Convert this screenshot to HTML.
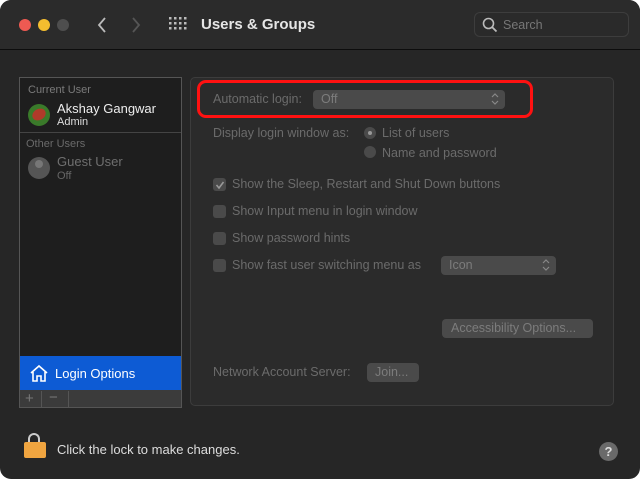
<!DOCTYPE html>
<html><head><style>
*{margin:0;padding:0;box-sizing:border-box}
body{width:640px;height:479px;background:#fff;font-family:"Liberation Sans",sans-serif;overflow:hidden;position:relative}
.win{position:absolute;left:0;top:0;width:640px;height:479px;background:#262626;border-radius:11px;overflow:hidden}
.tb{position:absolute;left:0;top:0;width:640px;height:50px;background:#2b2b2b;border-bottom:1px solid #0d0d0d}
.dot{position:absolute;top:19px;width:12px;height:12px;border-radius:50%}
.a{position:absolute;white-space:nowrap}
.g{color:#6b6b6b;font-size:12.5px}
.cb{position:absolute;width:13px;height:13px;border-radius:3px;background:#4a4a4a}
.pop{position:absolute;background:#4a4a4a;border-radius:4px;color:#7c7c7c;font-size:12.5px;padding:2px 8px}
</style></head><body>
<div class="win">
<div class="tb">
 <div class="dot" style="left:19px;background:#ee5a52"></div>
 <div class="dot" style="left:38px;background:#f4bd2f"></div>
 <div class="dot" style="left:57px;background:#4e4e4e"></div>
 <svg class="a" style="left:96px;top:16px" width="12" height="18"><path d="M9 2L3 9l6 7" stroke="#bbb" stroke-width="1.8" fill="none"/></svg>
 <svg class="a" style="left:130px;top:16px" width="12" height="18"><path d="M3 2l6 7-6 7" stroke="#555" stroke-width="1.8" fill="none"/></svg>
 <svg class="a" style="left:169px;top:17px" width="18" height="16" fill="#bbb">
  <g><rect x="0" y="0" width="2.5" height="2.5"/><rect x="5" y="0" width="2.5" height="2.5"/><rect x="10" y="0" width="2.5" height="2.5"/><rect x="15" y="0" width="2.5" height="2.5"/>
  <rect x="0" y="5" width="2.5" height="2.5"/><rect x="5" y="5" width="2.5" height="2.5"/><rect x="10" y="5" width="2.5" height="2.5"/><rect x="15" y="5" width="2.5" height="2.5"/>
  <rect x="0" y="10" width="2.5" height="2.5"/><rect x="5" y="10" width="2.5" height="2.5"/><rect x="10" y="10" width="2.5" height="2.5"/><rect x="15" y="10" width="2.5" height="2.5"/></g></svg>
 <div class="a" style="left:201px;top:16px;color:#e6e6e6;font-size:15px;font-weight:bold">Users &amp; Groups</div>
 <div class="a" style="left:474px;top:12px;width:155px;height:25px;border:1px solid #3d3d3d;border-radius:6px;background:#2a2a2a"></div>
 <svg class="a" style="left:482px;top:17px" width="16" height="16"><circle cx="6.5" cy="6.5" r="5" stroke="#bbb" stroke-width="1.6" fill="none"/><path d="M10 10l4.5 4.5" stroke="#bbb" stroke-width="1.8"/></svg>
 <div class="a" style="left:503px;top:18px;color:#777;font-size:12.5px">Search</div>
</div>

<div class="a" style="left:19px;top:77px;width:163px;height:331px;background:#1e1e1e;border:1px solid #555"></div>
<div class="a" style="left:20px;top:132px;width:161px;height:1px;background:#444"></div>
<div class="a g" style="left:28px;top:84px;font-size:11px;color:#7a7a7a">Current User</div>
<div class="a" style="left:28px;top:104px;width:22px;height:22px;border-radius:50%;background:#3a7a2a"></div>
<div class="a" style="left:32px;top:109px;width:14px;height:11px;border-radius:50%;background:#b03a2a;transform:rotate(-30deg)"></div>
<div class="a" style="left:57px;top:101px;color:#eee;font-size:13px">Akshay Gangwar</div>
<div class="a" style="left:57px;top:116px;color:#ddd;font-size:11px">Admin</div>
<div class="a" style="left:26px;top:138px;font-size:11px;color:#6a6a6a">Other Users</div>
<div class="a" style="left:28px;top:157px;width:22px;height:22px;border-radius:50%;background:#555"></div>
<div class="a" style="left:35px;top:160px;width:8px;height:8px;border-radius:50%;background:#777"></div>
<div class="a" style="left:57px;top:154px;color:#6f6f6f;font-size:13px">Guest User</div>
<div class="a" style="left:57px;top:170px;color:#666;font-size:11px">Off</div>
<div class="a" style="left:20px;top:356px;width:161px;height:34px;background:#0d5bd4"></div>
<svg class="a" style="left:29px;top:364px" width="20" height="19"><path d="M2 9L10 2l8 7M4 8v9h4v-5h4v5h4V8" stroke="#fff" stroke-width="1.6" fill="none"/></svg>
<div class="a" style="left:55px;top:366px;color:#fff;font-size:13px">Login Options</div>
<div class="a" style="left:20px;top:390px;width:161px;height:17px;background:#3b3b3b"></div>
<div class="a" style="left:41px;top:391px;width:1px;height:16px;background:#555"></div>
<div class="a" style="left:68px;top:391px;width:1px;height:16px;background:#555"></div>
<div class="a" style="left:25px;top:390px;color:#777;font-size:15px">+</div>
<div class="a" style="left:49px;top:389px;color:#777;font-size:15px">−</div>

<div class="a" style="left:190px;top:77px;width:424px;height:329px;background:#2b2b2b;border:1px solid #3c3c3c;border-radius:5px"></div>
<div class="a" style="left:197px;top:80px;width:336px;height:38px;border:3px solid #f11;border-radius:9px"></div>
<div class="a g" style="left:213px;top:92px">Automatic login:</div>
<div class="pop" style="left:313px;top:90px;width:192px;height:19px">Off</div>
<div class="a g" style="left:213px;top:126px">Display login window as:</div>
<div class="a" style="left:364px;top:127px;width:12px;height:12px;border-radius:50%;background:#4a4a4a"></div>
<div class="a" style="left:368px;top:131px;width:4px;height:4px;border-radius:50%;background:#999"></div>
<div class="a g" style="left:382px;top:126px">List of users</div>
<div class="a" style="left:364px;top:146px;width:12px;height:12px;border-radius:50%;background:#4a4a4a"></div>
<div class="a g" style="left:382px;top:146px">Name and password</div>
<div class="cb" style="left:213px;top:178px"></div>
<svg class="a" style="left:214px;top:179px" width="12" height="12"><path d="M2.5 6l2.5 3 4.5-6" stroke="#999" stroke-width="1.6" fill="none"/></svg>
<div class="a g" style="left:232px;top:177px">Show the Sleep, Restart and Shut Down buttons</div>
<div class="cb" style="left:213px;top:205px"></div>
<div class="a g" style="left:232px;top:204px">Show Input menu in login window</div>
<div class="cb" style="left:213px;top:232px"></div>
<div class="a g" style="left:232px;top:231px">Show password hints</div>
<div class="cb" style="left:213px;top:259px"></div>
<div class="a g" style="left:232px;top:258px">Show fast user switching menu as</div>
<div class="pop" style="left:441px;top:256px;width:115px;height:19px">Icon</div>
<svg class="a" style="left:490px;top:92px" width="10" height="14"><path d="M2 5l3-3 3 3M2 9l3 3 3-3" stroke="#888" stroke-width="1.2" fill="none"/></svg>
<svg class="a" style="left:541px;top:258px" width="10" height="14"><path d="M2 5l3-3 3 3M2 9l3 3 3-3" stroke="#888" stroke-width="1.2" fill="none"/></svg>
<div class="pop" style="left:442px;top:319px;width:151px;height:19px;padding-left:9px">Accessibility Options...</div>
<div class="a g" style="left:213px;top:365px">Network Account Server:</div>
<div class="pop" style="left:367px;top:363px;width:52px;height:19px">Join...</div>

<div class="a" style="left:28px;top:433px;width:12px;height:14px;border:2.5px solid #ccc;border-bottom:none;border-radius:6px 6px 0 0"></div>
<div class="a" style="left:24px;top:442px;width:22px;height:16px;background:#f0a540;border-radius:2px"></div>
<div class="a" style="left:57px;top:442px;color:#ddd;font-size:13px">Click the lock to make changes.</div>
<div class="a" style="left:599px;top:442px;width:19px;height:19px;border-radius:50%;background:#6a6a6a;color:#ddd;font-size:13px;text-align:center;line-height:19px;font-weight:bold">?</div>
</div>
</body></html>
